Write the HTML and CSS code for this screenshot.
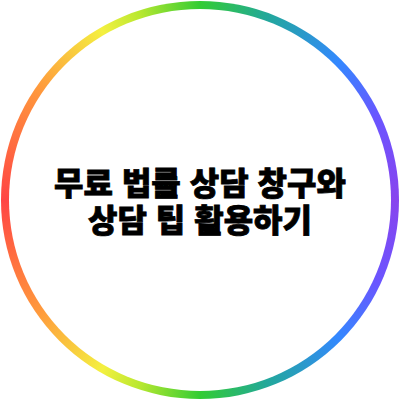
FILE: index.html
```html
<!DOCTYPE html>
<html lang="ko">
<head>
    <meta charset="UTF-8">
    <meta name="viewport" content="width=device-width, initial-scale=1.0">
    <title>무료 법률 상담 창구와 상담 팁 활용하기</title>
    <link rel="stylesheet" href="styles.css">
</head>
<body>

    <!-- 무지개 원형 테두리 -->
    <div class="page">
        <div class="ring">
            <div class="inner">
                <h1 class="title">무료 법률 상담 창구와<br>상담 팁 활용하기</h1>
            </div>
        </div>
    </div>

</body>
</html>
```

FILE: styles.css
```css
body {
    margin: 0;
    padding: 0;
    background: #ffffff;
    font-family: "Noto Sans CJK KR", "Noto Sans", sans-serif;
}

.page {
    width: 400px;
    height: 400px;
    display: flex;
    justify-content: center;
    align-items: center;
}

/* 원형 테두리 */
.ring {
    width: 398px;
    height: 398px;
    padding: 8px;
    box-sizing: border-box;
    border-radius: 50%;
    background: conic-gradient(
        #33cc33 0deg,
        #22a89a 20deg,
        #3388ff 45deg,
        #6a55ff 65deg,
        #8844ee 90deg,
        #6a55ff 115deg,
        #3388ff 135deg,
        #22a89a 160deg,
        #33cc33 180deg,
        #b8e830 198deg,
        #f4f040 210deg,
        #ff9a3c 235deg,
        #ff4444 270deg,
        #ff9a3c 305deg,
        #f4f040 330deg,
        #b8e830 342deg,
        #33cc33 360deg
    );
}

.inner {
    width: 100%;
    height: 100%;
    border-radius: 50%;
    background: #ffffff;
    display: flex;
    justify-content: center;
    align-items: center;
}

.title {
    margin: 0;
    font-size: 32px;
    font-weight: 900;
    line-height: 37px;
    color: #000000;
    text-align: center;
    -webkit-text-stroke: 0.8px #000000; /* 더 굵게 */
}
```
